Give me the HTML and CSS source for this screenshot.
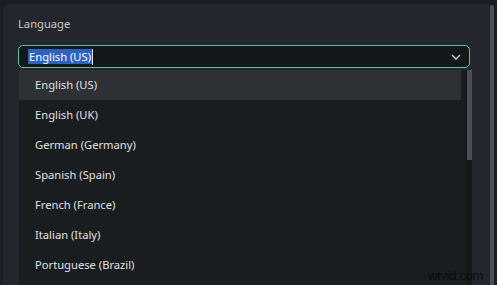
FILE: index.html
```html
<!DOCTYPE html>
<html lang="en">
<head>
    <meta charset="UTF-8">
    <meta name="viewport" content="width=device-width, initial-scale=1.0">
    <title>Language Settings</title>
    <link rel="stylesheet" href="styles.css">
</head>
<body>
    <div class="frame">
        <div class="panel">
            <div class="field-label">Language</div>

            <div class="select">
                <span class="select-value"><span class="selected-text">English (US)</span><span class="caret"></span></span>
                <svg class="chevron" width="10" height="6" viewBox="0 0 10 6">
                    <path d="M1 1 L5 5 L9 1" fill="none" stroke="#d6d6d6" stroke-width="1.3"/>
                </svg>
            </div>

            <div class="dropdown">
                <ul class="options">
                    <li class="option active">English (US)</li>
                    <li class="option">English (UK)</li>
                    <li class="option">German (Germany)</li>
                    <li class="option">Spanish (Spain)</li>
                    <li class="option">French (France)</li>
                    <li class="option">Italian (Italy)</li>
                    <li class="option">Portuguese (Brazil)</li>
                </ul>
                <div class="list-scroll">
                    <div class="list-thumb"></div>
                </div>
            </div>
        </div>
        <div class="page-scroll"></div>
    </div>

    <div class="watermark">wtvid.com</div>
</body>
</html>
```

FILE: styles.css
```css
* {
    margin: 0;
    padding: 0;
    box-sizing: border-box;
}

body {
    font-family: "Noto Sans", "Open Sans", sans-serif;
    background: #1b1e22;
    color: #e2e2e2;
    width: 497px;
    height: 285px;
    overflow: hidden;
    position: relative;
}

.frame {
    display: flex;
    height: 281px;
    margin-top: 4px;
    padding-left: 3px;
}

.panel {
    width: 487px;
    background: #23272d;
    border-top-left-radius: 7px;
    padding: 10px 0 0 15px;
}

.page-scroll {
    width: 4px;
    margin-top: 1px;
    background: #4a4f57;
    border-radius: 2px 2px 0 0;
}

.field-label {
    font-size: 11.2px;
    color: #c9cacc;
    height: 20px;
    line-height: 20px;
    margin-bottom: 11px;
}

.select {
    width: 452px;
    height: 23px;
    border: 1px solid #5fbea6;
    border-radius: 5px;
    background: #15181b;
    display: flex;
    align-items: center;
    justify-content: space-between;
    padding: 0 8px 0 9px;
}

.select-value {
    display: flex;
    align-items: center;
    font-size: 11.2px;
}

.selected-text {
    background: #2e62c2;
    color: #ffffff;
    line-height: 15px;
    padding: 0 1px;
}

.caret {
    width: 1px;
    height: 16px;
    background: #e8e8e8;
}

.chevron {
    margin-top: 1px;
}

.dropdown {
    display: flex;
    width: 453px;
    margin: 2px 0 0 1px;
    background: #1a1d20;
    height: 220px;
}

.options {
    list-style: none;
    flex: 1;
}

.option {
    height: 30px;
    line-height: 30px;
    padding-left: 16px;
    font-size: 11.2px;
    color: #e0e0e0;
    margin-right: 5px;
}

.option.active {
    background: #2d3035;
}

.list-scroll {
    width: 6px;
    background: #161819;
}

.list-thumb {
    height: 90px;
    margin-left: 1px;
    width: 5px;
    background: #4a4e56;
}

.watermark {
    position: absolute;
    left: 428px;
    top: 268px;
    font-family: "Liberation Sans", sans-serif;
    font-size: 13px;
    color: #0b0c0d;
    letter-spacing: -0.3px;
}
```
